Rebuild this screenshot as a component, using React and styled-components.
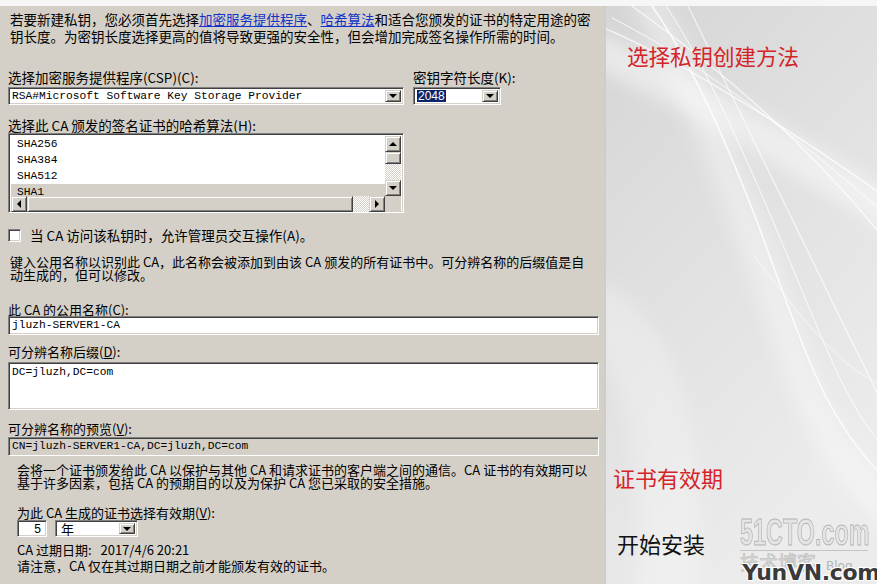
import React from 'react';
import styled, { createGlobalStyle, css } from 'styled-components';

const GlobalStyle = createGlobalStyle`
  html, body {
    margin: 0;
    padding: 0;
    background: #f6f6f6;
  }
  body {
    font-family: "Noto Sans CJK SC", "Noto Sans", sans-serif;
  }
`;

const raised = css`
  box-sizing: border-box;
  background: #d4d0c8;
  border: 1px solid;
  border-color: #d4d0c8 #404040 #404040 #d4d0c8;
  box-shadow: inset 1px 1px 0 #fff, inset -1px -1px 0 #808080;
`;

const sunken = css`
  box-sizing: border-box;
  border: 1px solid;
  border-color: #808080 #fff #fff #808080;
  box-shadow: inset 1px 1px 0 #404040, inset -1px -1px 0 #d4d0c8;
`;

const mono = css`
  font-family: "Liberation Mono", "Noto Sans CJK SC", monospace;
  font-size: 11.25px;
`;

const Page = styled.div`
  width: 877px;
  height: 584px;
  box-sizing: border-box;
  padding-top: 6px;
  overflow: hidden;
  display: flex;
  background: #f6f6f6;
`;

const Form = styled.div`
  width: 604px;
  flex-shrink: 0;
  background: #d4d0c8;
  color: #000;
  font-size: 13.5px;
  display: flex;
  flex-direction: column;
`;

const Section = styled.section`
  display: flex;
  flex-direction: column;
  padding: ${({ $pad }) => $pad};
`;

const Para = styled.p`
  margin: ${({ $mt }) => $mt}px 0 0 ${({ $indent = 0 }) => $indent}px;
  font-size: ${({ $size = 13.5 }) => $size}px;
  line-height: ${({ $lh }) => $lh}px;
`;

const Link = styled.a`
  color: #1233c8;
  text-decoration: underline;
`;

const Label = styled.div`
  margin-top: ${({ $mt = 0 }) => $mt}px;
  margin-bottom: ${({ $mb = 0 }) => $mb}px;
  font-size: ${({ $size = 13.5 }) => $size}px;
  line-height: ${({ $lh = 15 }) => $lh}px;
  white-space: nowrap;
`;

const FieldRow = styled.div`
  display: flex;
  gap: 9px;
  margin-top: ${({ $mt = 0 }) => $mt}px;
`;

const Field = styled.div`
  display: flex;
  flex-direction: column;
`;

const Combo = styled.div`
  ${sunken};
  width: ${({ $w }) => $w}px;
  height: ${({ $h = 18 }) => $h}px;
  padding: 2px;
  background: #fff;
  display: flex;
`;

const ComboValue = styled.div`
  flex: 1;
  display: flex;
  align-items: center;
  padding-left: 1px;
  white-space: nowrap;
  ${mono};
`;

const Highlight = styled.span`
  background: #0a246a;
  color: #fff;
  font-family: "Liberation Sans", Arial, sans-serif;
  font-size: 12px;
  line-height: 12px;
  padding: 0 1px;
`;

const PlainValue = styled.span`
  font-family: "Noto Sans CJK SC", sans-serif;
  font-size: 13px;
  line-height: 13px;
  padding-left: 2px;
`;

const DropButton = styled.div`
  ${raised};
  width: 16px;
  flex-shrink: 0;
  display: flex;
  align-items: center;
  justify-content: center;
`;

const arrows = {
  down: 'border-width: 4px 4px 0 4px; border-color: #000 transparent transparent transparent;',
  up: 'border-width: 0 4px 4px 4px; border-color: transparent transparent #000 transparent;',
  left: 'border-width: 4px 4px 4px 0; border-color: transparent #000 transparent transparent;',
  right: 'border-width: 4px 0 4px 4px; border-color: transparent transparent transparent #000;',
};

const Arrow = styled.span`
  width: 0;
  height: 0;
  border-style: solid;
  ${({ $dir }) => arrows[$dir]}
`;

const ListBox = styled.div`
  ${sunken};
  width: 396px;
  height: 80px;
  padding: 2px;
  background: #fff;
  display: grid;
  grid-template-columns: 1fr 16px;
  grid-template-rows: 60px 16px;
`;

const ListRows = styled.div`
  overflow: hidden;
`;

const ListRow = styled.div`
  height: 16px;
  line-height: 16px;
  padding-left: 6px;
  background: ${({ $selected }) => ($selected ? '#d4d0c8' : 'transparent')};
  ${mono};
`;

const VScroll = styled.div`
  display: flex;
  flex-direction: column;
`;

const HScroll = styled.div`
  display: flex;
`;

const ScrollButton = styled.div`
  ${raised};
  width: 16px;
  height: 16px;
  flex-shrink: 0;
  display: flex;
  align-items: center;
  justify-content: center;
`;

const Thumb = styled.div`
  ${raised};
  flex-shrink: 0;
  width: ${({ $w = 16 }) => $w}px;
  height: ${({ $h = 16 }) => $h}px;
`;

const Track = styled.div`
  flex: 1;
  background: repeating-conic-gradient(#fff 0 25%, #d4d0c8 0 50%) 0 0 / 2px 2px;
`;

const Corner = styled.div`
  background: #d4d0c8;
`;

const CheckRow = styled.label`
  display: flex;
  align-items: center;
  gap: 9px;
  margin-top: ${({ $mt }) => $mt}px;
  line-height: 15px;
`;

const CheckBox = styled.span`
  ${sunken};
  width: 13px;
  height: 13px;
  background: #fff;
`;

const TextBox = styled.div`
  ${sunken};
  width: 591px;
  height: ${({ $h }) => $h}px;
  padding: ${({ $multi }) => ($multi ? '3px 3px' : '0 3px')};
  display: flex;
  align-items: ${({ $multi }) => ($multi ? 'flex-start' : 'center')};
  background: ${({ $readOnly }) => ($readOnly ? '#d4d0c8' : '#fff')};
  line-height: 13px;
  ${mono};
`;

const Validity = styled.div`
  display: flex;
  gap: 8px;
`;

const NumberBox = styled.div`
  ${sunken};
  width: 30px;
  height: 17px;
  background: #fff;
  padding-right: 5px;
  display: flex;
  align-items: center;
  justify-content: flex-end;
  font-family: "Liberation Sans", Arial, sans-serif;
  font-size: 12px;
`;

const Side = styled.div`
  position: relative;
  flex: 1;
  overflow: hidden;
  display: flex;
  flex-direction: column;
  background: #e0e0e0;
`;

const Backdrop = styled.svg`
  position: absolute;
  inset: 0;
  width: 100%;
  height: 100%;
`;

const Caption = styled.div`
  position: relative;
  margin: ${({ $mt }) => $mt}px 0 0 ${({ $indent }) => $indent}px;
  font-size: ${({ $size }) => $size}px;
  line-height: 26px;
  color: ${({ $red }) => ($red ? '#d4242a' : '#111')};
  white-space: nowrap;
`;

const Watermark = styled.div`
  position: absolute;
  left: 136px;
  top: 510px;
  width: 128px;
  display: flex;
  flex-direction: column;
`;

const MarkSite = styled.div`
  height: 34px;
  border-bottom: 1px solid #c4c4c4;
  overflow: visible;
`;

const MarkSiteText = styled.span`
  display: inline-block;
  transform: scaleX(0.65);
  transform-origin: left top;
  font-family: "Liberation Sans", Arial, sans-serif;
  font-weight: 700;
  font-size: 36px;
  line-height: 34px;
  color: #e4e4e4;
  -webkit-text-stroke: 0.9px #b2b2b2;
  white-space: nowrap;
`;

const MarkBlog = styled.div`
  display: flex;
  align-items: baseline;
  gap: 10px;
  margin-top: 1px;
  font-size: 19px;
  line-height: 20px;
  color: #dadada;
  -webkit-text-stroke: 0.5px #b8b8b8;
`;

const MarkBlogWord = styled.span`
  font-family: "DejaVu Sans", sans-serif;
  font-size: 12px;
  color: #b4b4b4;
  -webkit-text-stroke: 0;
`;

const MarkBrand = styled.div`
  position: absolute;
  right: -3px;
  bottom: 0;
  font-family: "DejaVu Sans", "Liberation Sans", sans-serif;
  font-weight: 800;
  font-size: 22px;
  line-height: 22px;
  letter-spacing: -0.3px;
  color: #3a3a3a;
  text-shadow: 1px 1px 0 #fff, -1px -1px 0 #fff, 1px -1px 0 #fff, -1px 1px 0 #fff;
`;

const hashes = ['SHA256', 'SHA384', 'SHA512', 'SHA1'];

function SideBackdrop() {
  return (
    <Backdrop viewBox="0 0 273 578" preserveAspectRatio="none" aria-hidden="true">
      <defs>
        <linearGradient id="bg" x1="0" y1="0" x2="0.5" y2="1">
          <stop offset="0" stopColor="#d5d5d5" />
          <stop offset="0.45" stopColor="#e0e0e0" />
          <stop offset="1" stopColor="#ececec" />
        </linearGradient>
        <filter id="soft" x="-50%" y="-50%" width="200%" height="200%">
          <feGaussianBlur stdDeviation="9" />
        </filter>
        <filter id="thin" x="-10%" y="-10%" width="120%" height="120%">
          <feGaussianBlur stdDeviation="0.6" />
        </filter>
      </defs>
      <rect width="273" height="578" fill="url(#bg)" />
      <g fill="none" stroke="#fff" filter="url(#soft)">
        <path d="M-20 40 C60 70 160 130 300 215" strokeWidth="34" opacity="0.45" />
        <path d="M40 -10 C90 80 140 200 180 320 S240 460 300 520" strokeWidth="30" opacity="0.35" />
        <path d="M-20 300 C40 330 80 420 60 600" strokeWidth="60" opacity="0.25" />
      </g>
      <g fill="none" stroke="#fff" filter="url(#thin)">
        <path d="M0 22 C70 52 170 112 280 190" strokeWidth="1.3" opacity="0.85" />
        <path d="M8 12 C80 48 180 118 280 207" strokeWidth="1" opacity="0.8" />
        <path d="M28 0 C100 52 190 122 280 232" strokeWidth="1.4" opacity="0.7" />
        <path d="M48 0 C90 60 130 150 170 262 S230 420 280 472" strokeWidth="1.5" opacity="0.85" />
        <path d="M62 0 C102 60 142 150 186 256 S246 402 280 442" strokeWidth="1" opacity="0.8" />
        <path d="M84 0 C114 62 164 162 212 262 S262 362 280 402" strokeWidth="1.2" opacity="0.7" />
        <path d="M150 250 C190 300 230 360 280 380" strokeWidth="1" opacity="0.6" />
      </g>
      <rect width="2" height="578" fill="#cfcdc8" />
    </Backdrop>
  );
}

export default function App() {
  return (
    <Page>
      <GlobalStyle />
      <Form>
        <Section $pad="5px 0 0 8px">
          <Para $mt={0} $indent={2} $lh={17}>
            若要新建私钥，您必须首先选择<Link>加密服务提供程序</Link>、<Link>哈希算法</Link>和适合您颁发的证书的特定用途的密<br />
            钥长度。为密钥长度选择更高的值将导致更强的安全性，但会增加完成签名操作所需的时间。
          </Para>

          <FieldRow $mt={25}>
            <Field>
              <Label $mb={2}>选择加密服务提供程序(CSP)(C):</Label>
              <Combo $w={396}>
                <ComboValue>RSA#Microsoft Software Key Storage Provider</ComboValue>
                <DropButton><Arrow $dir="down" /></DropButton>
              </Combo>
            </Field>
            <Field>
              <Label $mb={2}>密钥字符长度(K):</Label>
              <Combo $w={88}>
                <ComboValue><Highlight>2048</Highlight></ComboValue>
                <DropButton><Arrow $dir="down" /></DropButton>
              </Combo>
            </Field>
          </FieldRow>

          <Label $mt={13}>选择此 CA 颁发的签名证书的哈希算法(H):</Label>
          <ListBox>
            <ListRows>
              {hashes.map((h) => (
                <ListRow key={h} $selected={h === 'SHA1'}>{h}</ListRow>
              ))}
            </ListRows>
            <VScroll>
              <ScrollButton><Arrow $dir="up" /></ScrollButton>
              <Thumb $h={12} />
              <Track />
              <ScrollButton><Arrow $dir="down" /></ScrollButton>
            </VScroll>
            <HScroll>
              <ScrollButton><Arrow $dir="left" /></ScrollButton>
              <Thumb $w={326} />
              <Track />
              <ScrollButton><Arrow $dir="right" /></ScrollButton>
            </HScroll>
            <Corner />
          </ListBox>

          <CheckRow $mt={15}>
            <CheckBox />
            <span>当 CA 访问该私钥时，允许管理员交互操作(A)。</span>
          </CheckRow>
        </Section>

        <Section $pad="0 0 0 8px">
          <Para $mt={13} $indent={2} $size={13} $lh={12.5}>
            键入公用名称以识别此 CA，此名称会被添加到由该 CA 颁发的所有证书中。可分辨名称的后缀值是自<br />
            动生成的，但可以修改。
          </Para>
          <Label $mt={22} $size={13} $lh={13}>此 CA 的公用名称(<u>C</u>):</Label>
          <TextBox $h={19}>jluzh-SERVER1-CA</TextBox>
          <Label $mt={10} $mb={4} $size={13} $lh={13}>可分辨名称后缀(<u>D</u>):</Label>
          <TextBox $h={48} $multi>DC=jluzh,DC=com</TextBox>
          <Label $mt={12} $mb={2} $size={13} $lh={13}>可分辨名称的预览(<u>V</u>):</Label>
          <TextBox $h={19} $readOnly>CN=jluzh-SERVER1-CA,DC=jluzh,DC=com</TextBox>
        </Section>

        <Section $pad="0 0 0 17px">
          <Para $mt={8} $size={13} $lh={12.5}>
            会将一个证书颁发给此 CA 以保护与其他 CA 和请求证书的客户端之间的通信。CA 证书的有效期可以<br />
            基于许多因素，包括 CA 的预期目的以及为保护 CA 您已采取的安全措施。
          </Para>
          <Label $mt={17} $mb={1} $size={13} $lh={13}>为此 CA 生成的证书选择有效期(<u>V</u>):</Label>
          <Validity>
            <NumberBox>5</NumberBox>
            <Combo $w={83} $h={17}>
              <ComboValue><PlainValue>年</PlainValue></ComboValue>
              <DropButton><Arrow $dir="down" /></DropButton>
            </Combo>
          </Validity>
          <Label $mt={6} $size={13} $lh={13}>CA 过期日期:&nbsp;&nbsp; 2017/4/6 20:21</Label>
          <Label $mt={3} $size={13} $lh={13}>请注意，CA 仅在其过期日期之前才能颁发有效的证书。</Label>
        </Section>
      </Form>

      <Side>
        <SideBackdrop />
        <Caption $red $size={21.5} $mt={37} $indent={23}>选择私钥创建方法</Caption>
        <Caption $red $size={22} $mt={395} $indent={9}>证书有效期</Caption>
        <Caption $size={22} $mt={40} $indent={13}>开始安装</Caption>
        <Watermark>
          <MarkSite><MarkSiteText>51CTO.com</MarkSiteText></MarkSite>
          <MarkBlog>技术博客<MarkBlogWord>Blog</MarkBlogWord></MarkBlog>
        </Watermark>
        <MarkBrand>YunVN.com</MarkBrand>
      </Side>
    </Page>
  );
}
